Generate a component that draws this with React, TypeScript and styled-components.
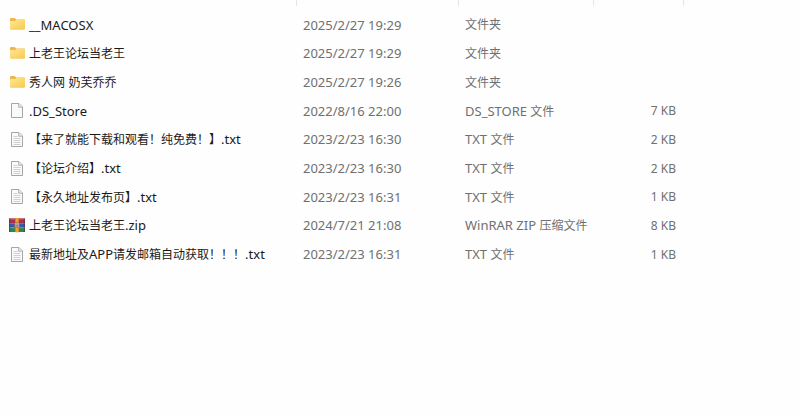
import React from 'react';
import styled, { createGlobalStyle } from 'styled-components';

const GlobalStyle = createGlobalStyle`
  body {
    margin: 0;
    background: #fefefe;
    font-family: 'Noto Sans', 'Noto Sans CJK SC', sans-serif;
    font-size: 12px;
    line-height: 16px;
  }
`;

type Kind = 'folder' | 'blank' | 'text' | 'archive';

interface Entry {
  name: string;
  date: string;
  type: string;
  size?: string;
  kind: Kind;
}

const entries: Entry[] = [
  { name: '__MACOSX', date: '2025/2/27 19:29', type: '文件夹', kind: 'folder' },
  { name: '上老王论坛当老王', date: '2025/2/27 19:29', type: '文件夹', kind: 'folder' },
  { name: '秀人网 奶芙乔乔', date: '2025/2/27 19:26', type: '文件夹', kind: 'folder' },
  { name: '.DS_Store', date: '2022/8/16 22:00', type: 'DS_STORE 文件', size: '7 KB', kind: 'blank' },
  { name: '【来了就能下载和观看！纯免费！】.txt', date: '2023/2/23 16:30', type: 'TXT 文件', size: '2 KB', kind: 'text' },
  { name: '【论坛介绍】.txt', date: '2023/2/23 16:30', type: 'TXT 文件', size: '2 KB', kind: 'text' },
  { name: '【永久地址发布页】.txt', date: '2023/2/23 16:31', type: 'TXT 文件', size: '1 KB', kind: 'text' },
  { name: '上老王论坛当老王.zip', date: '2024/7/21 21:08', type: 'WinRAR ZIP 压缩文件', size: '8 KB', kind: 'archive' },
  { name: '最新地址及APP请发邮箱自动获取！！！.txt', date: '2023/2/23 16:31', type: 'TXT 文件', size: '1 KB', kind: 'text' },
];

const columns = [
  { label: '名称', width: 297 },
  { label: '修改日期', width: 162 },
  { label: '类型', width: 135 },
  { label: '大小', width: 90 },
];

const FileTable = styled.table`
  width: 100%;
  height: 269px;
  table-layout: fixed;
  border-collapse: collapse;
`;

const Column = styled.col<{ $width?: number }>`
  width: ${({ $width }) => ($width ? `${$width}px` : 'auto')};
`;

const HeaderCell = styled.th`
  height: 11px;
  padding: 0;
  vertical-align: top;
`;

const Divider = styled.div`
  height: 6px;
  border-right: 1px solid #e6e6e6;
`;

const Cell = styled.td<{ $align?: 'right' }>`
  padding: 0 8px 0 6px;
  color: #707070;
  text-align: ${({ $align }) => $align ?? 'left'};
  vertical-align: middle;
  white-space: nowrap;
`;

const NameCell = styled(Cell)`
  padding-left: 8px;
  color: #1a1a1a;
`;

const NameContent = styled.div`
  display: flex;
  align-items: center;
  gap: 3px;
`;

const Icon = styled.svg`
  flex: none;
  width: 18px;
  height: 18px;
`;

const Latin = styled.span`
  font-size: 13px;
`;

/* Latin runs are set one size up so they balance the denser Chinese glyphs. */
function MixedText({ text }: { text: string }) {
  return (
    <span>
      {text.split(/([\x20-\x7e]+)/).map((run, i) =>
        i % 2 ? <Latin key={i}>{run}</Latin> : run,
      )}
    </span>
  );
}

function FolderIcon() {
  return (
    <Icon viewBox="0 1 18 18" aria-hidden="true">
      <defs>
        <linearGradient id="folderFront" x1="0" y1="0" x2="1" y2="1">
          <stop offset="0" stopColor="#ffe595" />
          <stop offset="1" stopColor="#f9cb4d" />
        </linearGradient>
      </defs>
      <path d="M2 4q0-1 1-1h3.5l1.8 1.6H16q1 0 1 1V8H2z" fill="#eab94a" />
      <path d="M2 6h5l1.500-.9H16q1 0 1 .8v7.600q0 1-1 1H3q-1 0-1-1z" fill="url(#folderFront)" />
      <path d="M2.500 14.300h14" stroke="#ecbf58" strokeWidth=".5" />
    </Icon>
  );
}

function PageIcon({ lined }: { lined: boolean }) {
  return (
    <Icon viewBox="0 1 18 18" aria-hidden="true">
      <path d="M3.500 2.500h7.500l3.500 3.500v10.500h-11z" fill="#fafafa" stroke="#a6a6a6" strokeLinejoin="round" />
      <path d="M10.700 2.500v3.700h3.700" fill="#eeeeee" stroke="#a6a6a6" strokeWidth=".9" />
      {lined && (
        <path d="M5.500 6.500h4M5.500 8.500h7M5.500 10.500h7M5.500 12.500h7M5.500 14.500h7" stroke="#c3c5c8" strokeWidth=".8" />
      )}
    </Icon>
  );
}

function ArchiveIcon() {
  return (
    <Icon viewBox="0 1 18 18" aria-hidden="true">
      <path d="M1 2.500h16v4.600H1z" fill="#a8324a" />
      <path d="M1 2.500h16v1.200H1z" fill="#c75467" />
      <path d="M1 7h16v4.300H1z" fill="#3a55b5" />
      <path d="M1 7h16v1H1z" fill="#5d79cf" />
      <path d="M1 11.300h16v4.700H1z" fill="#2c8650" />
      <path d="M1 11.300h16v1H1z" fill="#55a86b" />
      <path d="M1 2.500h1.200V16H1zM15.800 2.500H17V16h-1.200z" fill="#55324a" opacity=".6" />
      <path d="M7 2h4v14.200H7z" fill="#d9822b" />
      <path d="M8.300 2h1.400v14.200H8.300z" fill="#f0ae4a" />
      <rect x="6.500" y="7" width="5" height="4" rx=".7" fill="#e9dfcf" stroke="#80503c" strokeWidth=".7" />
      <path d="M7.700 8.300v1.600h2.600V8.300M9 7.700v2.200" fill="none" stroke="#65545a" strokeWidth=".7" />
    </Icon>
  );
}

function EntryIcon({ kind }: { kind: Kind }) {
  if (kind === 'folder') return <FolderIcon />;
  if (kind === 'archive') return <ArchiveIcon />;
  return <PageIcon lined={kind === 'text'} />;
}

export default function App() {
  return (
    <main lang="zh-CN">
      <GlobalStyle />
      <FileTable>
        <colgroup>
          {columns.map((c) => (
            <Column key={c.label} $width={c.width} />
          ))}
          <Column />
        </colgroup>
        <thead>
          <tr>
            {columns.map((c) => (
              <HeaderCell key={c.label} scope="col" aria-label={c.label}>
                <Divider />
              </HeaderCell>
            ))}
          </tr>
        </thead>
        <tbody>
          {entries.map((e) => (
            <tr key={e.name}>
              <NameCell>
                <NameContent>
                  <EntryIcon kind={e.kind} />
                  <MixedText text={e.name} />
                </NameContent>
              </NameCell>
              <Cell>
                <MixedText text={e.date} />
              </Cell>
              <Cell>
                <MixedText text={e.type} />
              </Cell>
              <Cell $align="right">{e.size}</Cell>
            </tr>
          ))}
        </tbody>
      </FileTable>
    </main>
  );
}
